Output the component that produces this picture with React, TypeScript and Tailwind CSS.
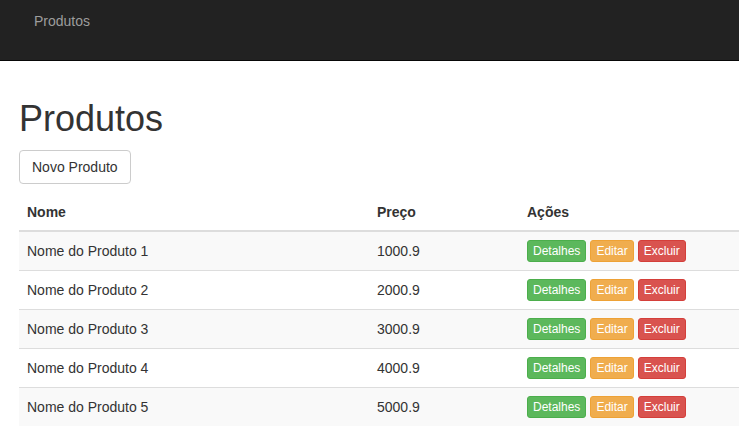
import React from "react";

const rows = [
  { nome: "Nome do Produto 1", preco: "1000.9" },
  { nome: "Nome do Produto 2", preco: "2000.9" },
  { nome: "Nome do Produto 3", preco: "3000.9" },
  { nome: "Nome do Produto 4", preco: "4000.9" },
  { nome: "Nome do Produto 5", preco: "5000.9" },
];

export default function App() {
  return (
    <div
      className="min-h-[445px] bg-white text-[#333] text-[14px] leading-[20px] overflow-hidden"
      style={{ fontFamily: '"Liberation Sans", Arial, sans-serif' }}
    >
      <nav className="h-[61px] bg-[#222] border-b border-[#080808]">
        <div className="pl-[34px] pt-[11px] text-[#9d9d9d] text-[14px] leading-[20px]">
          Produtos
        </div>
      </nav>
      <main className="pl-[19px]">
        <h1 className="mt-[38px] mb-[11px] text-[36px] leading-[40px] font-normal text-[#333]">
          Produtos
        </h1>
        <div className="mb-[10px]">
          <button className="h-[34px] px-[12px] border border-[#ccc] rounded-[4px] bg-white text-[#333] text-[14px] leading-[20px]">
            Novo Produto
          </button>
        </div>
        <table className="w-[720px] border-collapse table-fixed">
          <colgroup>
            <col className="w-[350px]" />
            <col className="w-[150px]" />
            <col />
          </colgroup>
          <thead>
            <tr>
              <th className="text-left font-bold px-[8px] py-[8px] border-b-2 border-[#ddd] align-bottom leading-[20px]">
                Nome
              </th>
              <th className="text-left font-bold px-[8px] py-[8px] border-b-2 border-[#ddd] align-bottom leading-[20px]">
                Preço
              </th>
              <th className="text-left font-bold px-[8px] py-[8px] border-b-2 border-[#ddd] align-bottom leading-[20px]">
                Ações
              </th>
            </tr>
          </thead>
          <tbody>
            {rows.map((r, i) => (
              <tr key={i} className={i % 2 === 0 ? "bg-[#f9f9f9]" : "bg-white"}>
                <td className="px-[8px] py-[8px] border-t border-[#ddd] align-middle">{r.nome}</td>
                <td className="px-[8px] py-[8px] border-t border-[#ddd] align-middle">{r.preco}</td>
                <td className="px-[8px] py-[8px] border-t border-[#ddd] align-middle">
                  <div className="flex gap-[4px]">
                    <span className="h-[22px] px-[5px] border border-[#4cae4c] bg-[#5cb85c] text-white text-[12px] leading-[20px] rounded-[3px]">
                      Detalhes
                    </span>
                    <span className="h-[22px] px-[5px] border border-[#eea236] bg-[#f0ad4e] text-white text-[12px] leading-[20px] rounded-[3px]">
                      Editar
                    </span>
                    <span className="h-[22px] px-[5px] border border-[#d43f3a] bg-[#d9534f] text-white text-[12px] leading-[20px] rounded-[3px]">
                      Excluir
                    </span>
                  </div>
                </td>
              </tr>
            ))}
          </tbody>
        </table>
      </main>
    </div>
  );
}
